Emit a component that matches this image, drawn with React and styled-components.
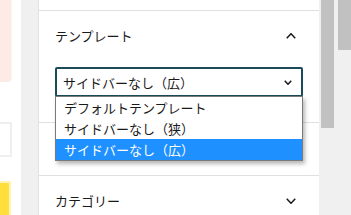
import React from "react";
import styled, { createGlobalStyle } from "styled-components";

const Global = createGlobalStyle`
  html, body { margin: 0; padding: 0; background: #f0f0f0; }
  body { font-family: "Noto Sans CJK JP", "Noto Sans", sans-serif; overflow: hidden; }
`;

const Page = styled.div`
  display: flex;
  width: 351px;
  height: 215px;
  overflow: hidden;
`;

const LeftStrip = styled.div`
  width: 21px;
  flex: none;
  background: #fff;
  display: flex;
  flex-direction: column;
`;

const PeachCard = styled.div`
  width: 11px;
  height: 82px;
  background: #fdece6;
  border-bottom-right-radius: 4px;
  border-right: 1px solid #fdf3ef;
`;

const OutlineBox = styled.div`
  margin-top: 40px;
  width: 10px;
  height: 31px;
  border: 2px solid #efefef;
  border-left: none;
`;

const YellowBox = styled.div`
  margin-top: 24px;
  width: 9px;
  flex: 1;
  background: #fedf3c;
  border: 2px solid #fff3b8;
  border-left: none;
  border-bottom: none;
`;

const Gutter = styled.div`
  width: 17px;
  flex: none;
  background: #f0f0f0;
  border-right: 1px solid #e2e2e2;
`;

const Panel = styled.div`
  position: relative;
  width: 280px;
  flex: none;
  background: #fff;
  padding-top: 10px;
  color: #1a1a1a;
`;

const Section = styled.div`
  border-top: 1px solid #e0e0e0;
  height: ${(p) => p.$h}px;
  box-sizing: border-box;
`;

const Header = styled.div`
  height: 49px;
  padding: 0 16px;
  display: flex;
  align-items: center;
  justify-content: space-between;
  font-size: 13px;
`;

const IconBox = styled.span`
  width: 24px;
  height: 24px;
  display: flex;
  align-items: center;
  justify-content: center;
`;

const SelectWrap = styled.div`
  position: relative;
  margin: 7px 16px 0;
`;

const Select = styled.div`
  height: 30px;
  box-sizing: border-box;
  border: 2px solid #1b4a59;
  border-radius: 2px;
  display: flex;
  align-items: center;
  justify-content: space-between;
  padding: 0 9px 0 6px;
  font-size: 13px;
  background: #fff;
`;

const List = styled.ul`
  position: absolute;
  left: 0;
  right: 0;
  top: 29px;
  margin: 0;
  padding: 0;
  list-style: none;
  background: #fff;
  border: 1px solid #7a7a7a;
  box-shadow: 2px 3px 4px rgba(0, 0, 0, 0.28);
  z-index: 5;
`;

const Item = styled.li`
  height: 21px;
  line-height: 21px;
  padding-left: 8px;
  font-size: 13px;
  color: ${(p) => (p.$active ? "#fff" : "#1a1a1a")};
  background: ${(p) => (p.$active ? "#1e90ff" : "transparent")};
`;

const RightGap = styled.div`
  width: 2px;
  flex: none;
  background: #f0f0f0;
`;

const Track = styled.div`
  width: 13px;
  flex: none;
  background: #f0f0f0;
  display: flex;
  flex-direction: column;
`;

const Thumb = styled.div`
  height: ${(p) => p.$h}px;
  background: #c1c1c1;
`;

const Spacer = styled.div`
  width: 4px;
  flex: none;
  background: #f0f0f0;
`;

const Chevron = ({ up, w = 10 }) => {
  const h = w / 2 + 1;
  return (
    <svg width={w} height={h} viewBox={`0 0 ${w} ${h}`} fill="none">
      <path
        d={
          up
            ? `M0.75 ${h - 0.75} L${w / 2} 0.75 L${w - 0.75} ${h - 0.75}`
            : `M0.75 0.75 L${w / 2} ${h - 0.75} L${w - 0.75} 0.75`
        }
        stroke="#1a1a1a"
        strokeWidth="1.5"
      />
    </svg>
  );
};

export default function App() {
  return (
    <Page>
      <Global />
      <LeftStrip>
        <PeachCard />
        <OutlineBox />
        <YellowBox />
      </LeftStrip>
      <Gutter />
      <Panel>
        <Section $h={112}>
          <Header>
            <span>テンプレート</span>
            <IconBox>
              <Chevron up />
            </IconBox>
          </Header>
          <SelectWrap>
            <Select>
              <span>サイドバーなし（広）</span>
              <Chevron w={8} />
            </Select>
            <List>
              <Item>デフォルトテンプレート</Item>
              <Item>サイドバーなし（狭）</Item>
              <Item $active>サイドバーなし（広）</Item>
            </List>
          </SelectWrap>
        </Section>
        <Section $h={53} />
        <Section $h={60}>
          <Header>
            <span>カテゴリー</span>
            <IconBox>
              <Chevron />
            </IconBox>
          </Header>
        </Section>
      </Panel>
      <RightGap />
      <Track>
        <Thumb $h={128} />
      </Track>
      <Spacer />
      <Track>
        <Thumb $h={50} />
      </Track>
    </Page>
  );
}
